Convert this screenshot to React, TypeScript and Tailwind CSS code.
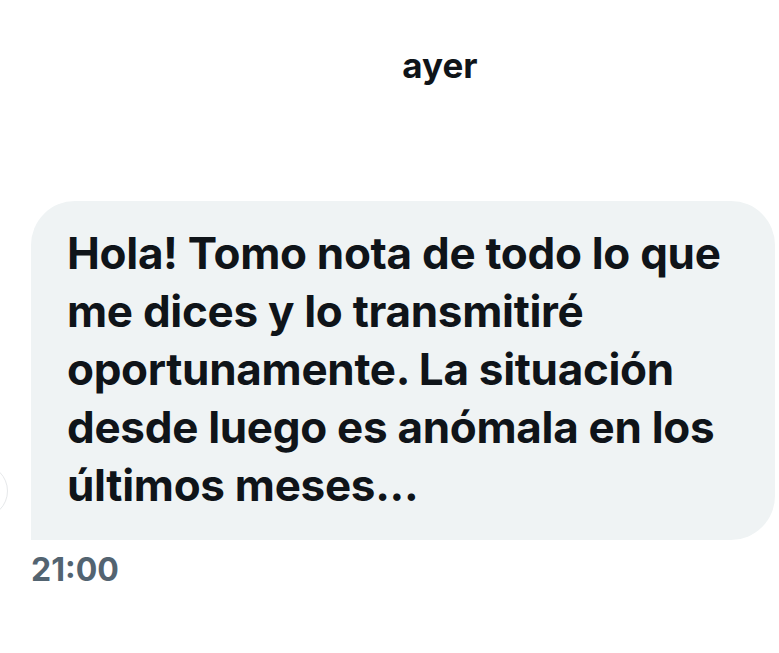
export default function App() {
  return (
    <div
      className="w-[779px] h-[653px] bg-white overflow-hidden text-[#0f1419]"
      style={{ fontFamily: "Inter, 'Noto Sans', sans-serif" }}
    >
      <div className="pt-[40px] pl-[101px] text-center text-[35px] font-bold leading-[50px]">ayer</div>
      <div className="mt-[111px] flex items-end">
        <div className="ml-[-46px] mr-[23px] mb-[22px] w-[54px] h-[54px] shrink-0 rounded-full border border-[#e6e8ea] bg-white"></div>
        <div className="w-[744px] rounded-[44px] rounded-bl-none bg-[#eff3f4] pl-[36px] pr-[36px] pt-[23px] pb-[26px] text-[44px] font-bold leading-[58px] tracking-[-0.3px]">
          Hola! Tomo nota de todo lo que me dices y lo transmitiré oportunamente. La situación desde luego es anómala en los últimos meses...
        </div>
      </div>
      <div className="pl-[31px] mt-[10px] text-[32px] font-bold leading-[40px] text-[#536471]">21:00</div>
    </div>
  );
}
